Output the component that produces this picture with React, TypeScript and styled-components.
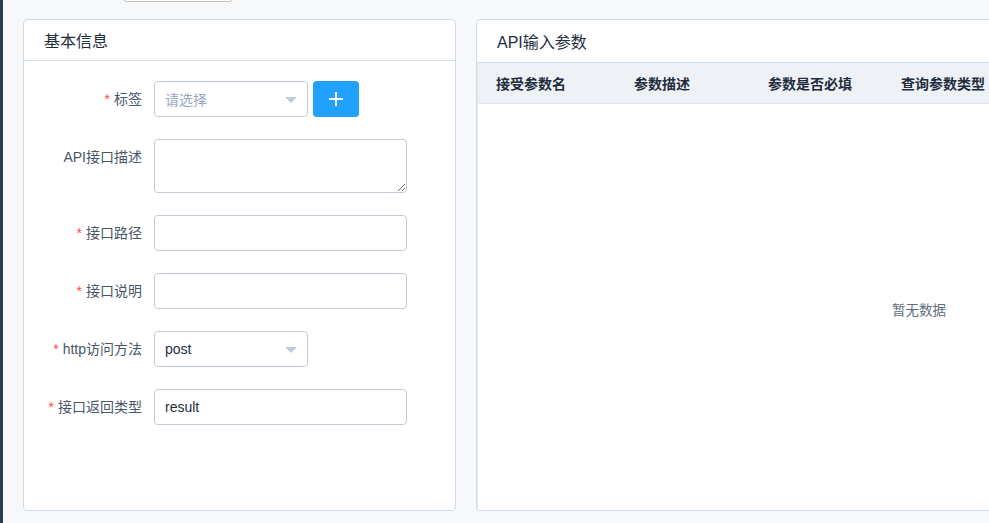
import React from "react";
import styled, { createGlobalStyle } from "styled-components";

const GlobalStyle = createGlobalStyle`
  html, body {
    margin: 0;
    padding: 0;
    overflow: hidden;
    background: #f7f8fa;
  }
  body {
    font-family: "Liberation Sans", "Noto Sans CJK SC", sans-serif;
    font-size: 14px;
    color: #1f2d3d;
  }
  * {
    box-sizing: border-box;
  }
`;

const Layout = styled.div`
  display: flex;
  width: 989px;
  height: 523px;
  overflow: hidden;
`;

const SideEdge = styled.div`
  width: 3px;
  flex-shrink: 0;
  background: #2e3b4e;
`;

const Main = styled.div`
  flex: 1;
  padding: 0 0 0 20px;
  display: flex;
  flex-direction: column;
  min-width: 0;
`;

const Toolbar = styled.div`
  display: flex;
  padding-left: 100px;
  margin-top: -34px;
  height: 36px;
`;

const GhostButton = styled.button`
  width: 110px;
  height: 36px;
  border: 1px solid #c4c4c4;
  border-radius: 4px;
  background: #fff;
`;

const Columns = styled.div`
  display: flex;
  gap: 20px;
  margin-top: 17px;
`;

const Card = styled.div<{ $width: number }>`
  width: ${(p) => p.$width}px;
  height: 492px;
  flex-shrink: 0;
  background: #fff;
  border: 1px solid #d1dbe5;
  border-radius: 4px;
  display: flex;
  flex-direction: column;
  overflow: hidden;
`;

const CardHeader = styled.div<{ $height: number }>`
  height: ${(p) => p.$height}px;
  display: flex;
  align-items: center;
  padding: 0 20px;
  font-size: 16px;
  color: #1f2d3d;
  border-bottom: 1px solid #d1dbe5;
  flex-shrink: 0;
`;

const Form = styled.div`
  padding: 20px 0 0 0;
  display: flex;
  flex-direction: column;
  gap: 22px;
`;

const FormItem = styled.div`
  display: flex;
  align-items: flex-start;
`;

const Label = styled.label`
  width: 130px;
  padding-right: 12px;
  text-align: right;
  line-height: 36px;
  font-size: 14px;
  color: #48576a;
  white-space: nowrap;
`;

const Star = styled.span`
  color: #ff4949;
  margin-right: 4px;
`;

const Control = styled.div`
  display: flex;
  align-items: center;
  gap: 5px;
`;

const SelectBox = styled.div<{ $placeholder?: boolean }>`
  position: relative;
  width: 154px;
  height: 36px;
  border: 1px solid #bfcbd9;
  border-radius: 4px;
  background: #fff;
  padding: 0 30px 0 10px;
  display: flex;
  align-items: center;
  font-size: 14px;
  color: ${(p) => (p.$placeholder ? "#97a8be" : "#1f2d3d")};
`;

const Caret = styled.span`
  position: absolute;
  right: 10px;
  top: 15px;
  width: 0;
  height: 0;
  border-left: 6px solid transparent;
  border-right: 6px solid transparent;
  border-top: 6px solid #bfcbd9;
`;

const TextInput = styled.input`
  width: 253px;
  height: 36px;
  border: 1px solid #bfcbd9;
  border-radius: 4px;
  padding: 0 10px;
  font-family: inherit;
  font-size: 14px;
  color: #1f2d3d;
  background: #fff;
  outline: none;
`;

const TextArea = styled.textarea`
  width: 253px;
  height: 54px;
  border: 1px solid #bfcbd9;
  border-radius: 4px;
  padding: 5px 10px;
  font-family: inherit;
  font-size: 14px;
  color: #1f2d3d;
  resize: vertical;
  outline: none;
  display: block;
`;

const PrimaryButton = styled.button`
  width: 46px;
  height: 36px;
  border: none;
  border-radius: 4px;
  background: #20a0ff;
  display: flex;
  align-items: center;
  justify-content: center;
  padding: 0;
`;

const Table = styled.div`
  flex: 1;
  display: flex;
  flex-direction: column;
  border-left: 1px solid #dfe6ec;
`;

const TableHead = styled.div`
  display: flex;
  height: 41px;
  background: #eef1f6;
  border-bottom: 1px solid #dfe6ec;
  flex-shrink: 0;
`;

const HeadCell = styled.div<{ $width: number }>`
  width: ${(p) => p.$width}px;
  flex-shrink: 0;
  padding: 0 18px;
  display: flex;
  align-items: center;
  font-size: 14px;
  font-weight: bold;
  color: #1f2d3d;
  white-space: nowrap;
`;

const EmptyBody = styled.div`
  flex: 1;
  display: flex;
  align-items: center;
  justify-content: center;
  font-size: 13.5px;
  color: #5e6d82;
  padding-top: 4px;
`;

const PlusIcon = () => (
  <svg width="14" height="14" viewBox="0 0 14 14">
    <path d="M7 0v14M0 7h14" stroke="#fff" strokeWidth="2" />
  </svg>
);

const columns = [
  { title: "接受参数名", width: 138 },
  { title: "参数描述", width: 134 },
  { title: "参数是否必填", width: 133 },
  { title: "查询参数类型", width: 134 },
  { title: "参数默认值", width: 170 },
  { title: "操作", width: 174 },
];

export default function App() {
  return (
    <>
      <GlobalStyle />
      <Layout>
        <SideEdge />
        <Main>
          <Toolbar>
            <GhostButton />
          </Toolbar>
          <Columns>
            <Card $width={433}>
              <CardHeader $height={41}>基本信息</CardHeader>
              <Form>
                <FormItem>
                  <Label>
                    <Star>*</Star>标签
                  </Label>
                  <Control>
                    <SelectBox $placeholder>
                      请选择
                      <Caret />
                    </SelectBox>
                    <PrimaryButton>
                      <PlusIcon />
                    </PrimaryButton>
                  </Control>
                </FormItem>
                <FormItem>
                  <Label>API接口描述</Label>
                  <Control>
                    <TextArea />
                  </Control>
                </FormItem>
                <FormItem>
                  <Label>
                    <Star>*</Star>接口路径
                  </Label>
                  <Control>
                    <TextInput />
                  </Control>
                </FormItem>
                <FormItem>
                  <Label>
                    <Star>*</Star>接口说明
                  </Label>
                  <Control>
                    <TextInput />
                  </Control>
                </FormItem>
                <FormItem>
                  <Label>
                    <Star>*</Star>http访问方法
                  </Label>
                  <Control>
                    <SelectBox>
                      post
                      <Caret />
                    </SelectBox>
                  </Control>
                </FormItem>
                <FormItem>
                  <Label>
                    <Star>*</Star>接口返回类型
                  </Label>
                  <Control>
                    <TextInput defaultValue="result" />
                  </Control>
                </FormItem>
              </Form>
            </Card>
            <Card $width={885}>
              <CardHeader $height={43}>API输入参数</CardHeader>
              <Table>
                <TableHead>
                  {columns.map((c) => (
                    <HeadCell key={c.title} $width={c.width}>
                      {c.title}
                    </HeadCell>
                  ))}
                </TableHead>
                <EmptyBody>暂无数据</EmptyBody>
              </Table>
            </Card>
          </Columns>
        </Main>
      </Layout>
    </>
  );
}
